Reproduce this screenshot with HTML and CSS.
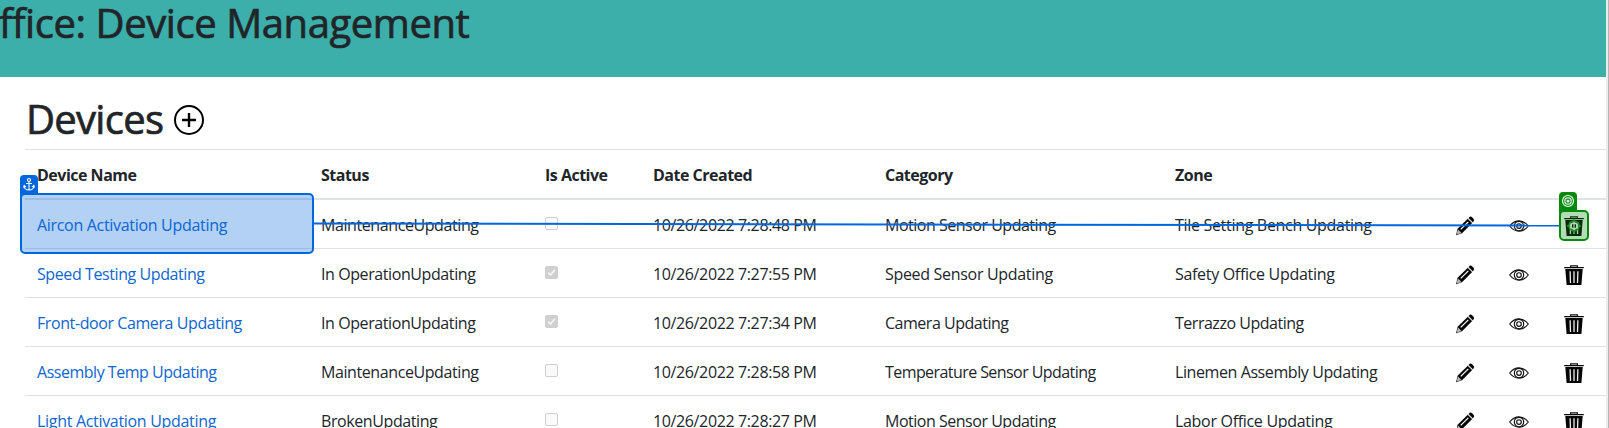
FILE: index.html
```html
<!DOCTYPE html>
<html lang="en">
<head>
<meta charset="utf-8">
<title>Device Management</title>
<link rel="stylesheet" href="styles.css">
</head>
<body>
<svg class="defs" width="0" height="0">
  <symbol id="pencil" viewBox="0 0 20 20">
    <path fill="#050505" d="M1 19.3 2.6 12.8 12.8 2.7 17.2 7.1 7 17.2Z"/>
    <path fill="#050505" d="M13.6 1.9 14.7.8Q15.8.1 16.9 1.1L18.7 2.9Q19.6 4.1 18.7 5.2L17.8 6.3Z"/>
    <path stroke="#fff" stroke-width="1.3" d="M5.7 13.4 13.3 5.9"/>
    <path stroke="#bbb" stroke-width="1" d="M12.8 2.3 17.5 7"/>
    <path fill="#bbb" d="M1.6 18.6 3 13.4 6.5 16.9Z"/>
  </symbol>
  <symbol id="eye" viewBox="0 0 20 20">
    <g fill="none" stroke="#111" stroke-width="1.15">
      <path d="M.7 10Q4.8 4.8 10 4.8T19.3 10Q15.2 15.2 10 15.2T.7 10Z"/>
      <circle cx="10" cy="10" r="4.7"/><circle cx="10" cy="10" r="2.3"/>
    </g>
  </symbol>
  <symbol id="trash" viewBox="0 0 20 20">
    <path fill="none" stroke="#111" stroke-width="1.2" d="M6.6 2.2V.8H13.4V2.2"/>
    <path fill="#050505" d="M.2 2H19.8V3.3H.2ZM1.3 4H18.7L17.4 20H2.6Z"/>
    <path stroke="#eee" stroke-width="1.3" d="M6.1 6.2 6.5 18M10 6.2V18M13.9 6.2 13.5 18"/>
  </symbol>
</svg>
<div class="page">
  <header class="banner"><h1>ffice: Device Management</h1></header>
  <main class="content">
    <h2 class="title"><span>Devices</span>
      <svg width="30" height="30" viewBox="0 0 30 30" fill="none" stroke="#000"><circle cx="15" cy="15" r="14" stroke-width="2"/><path stroke-width="2.4" d="M8 15H22M15 8V22"/></svg>
    </h2>
    <div class="table">
      <div class="row head"><b>Device Name</b><b>Status</b><b>Is Active</b><b>Date Created</b><b>Category</b><b>Zone</b></div>
      <div class="row"><a class="wide">Aircon Activation Updating</a><span>MaintenanceUpdating</span><i class="box"></i><span class="date">10/26/2022 7:28:48 PM</span><span class="category">Motion Sensor Updating</span><span class="wide">Tile Setting Bench Updating</span><svg class="ico"><use href="#pencil"/></svg><svg class="ico"><use href="#eye"/></svg><svg class="ico"><use href="#trash"/></svg></div>
      <div class="row"><a>Speed Testing Updating</a><span>In OperationUpdating</span><i class="box on"><svg viewBox="0 0 13 13"><path d="M2.6 6.7 5.2 9.4 10.5 3.4"/></svg></i><span class="date">10/26/2022 7:27:55 PM</span><span class="wide">Speed Sensor Updating</span><span class="wide">Safety Office Updating</span><svg class="ico"><use href="#pencil"/></svg><svg class="ico"><use href="#eye"/></svg><svg class="ico"><use href="#trash"/></svg></div>
      <div class="row"><a>Front-door Camera Updating</a><span>In OperationUpdating</span><i class="box on"><svg viewBox="0 0 13 13"><path d="M2.6 6.7 5.2 9.4 10.5 3.4"/></svg></i><span class="date">10/26/2022 7:27:34 PM</span><span class="category">Camera Updating</span><span class="category">Terrazzo Updating</span><svg class="ico"><use href="#pencil"/></svg><svg class="ico"><use href="#eye"/></svg><svg class="ico"><use href="#trash"/></svg></div>
      <div class="row"><a class="category">Assembly Temp Updating</a><span>MaintenanceUpdating</span><i class="box"></i><span class="date">10/26/2022 7:28:58 PM</span><span class="tight">Temperature Sensor Updating</span><span>Linemen Assembly Updating</span><svg class="ico"><use href="#pencil"/></svg><svg class="ico"><use href="#eye"/></svg><svg class="ico"><use href="#trash"/></svg></div>
      <div class="row"><a class="wide">Light Activation Updating</a><span>BrokenUpdating</span><i class="box"></i><span class="date">10/26/2022 7:28:27 PM</span><span class="category">Motion Sensor Updating</span><span class="wide">Labor Office Updating</span><svg class="ico"><use href="#pencil"/></svg><svg class="ico"><use href="#eye"/></svg><svg class="ico"><use href="#trash"/></svg></div>
    </div>
  </main>
</div>
<svg class="overlay" width="1609" height="428" fill="none">
  <path stroke="#0067df" stroke-width="2" d="M314 223.500 1559 225.500"/>
  <rect x="21" y="194" width="292" height="59" rx="4" fill="#0067df" fill-opacity=".3" stroke="#0067df" stroke-width="2"/>
  <path fill="#0067df" d="M20 198V179Q20 175 24 175H34Q38 175 38 179V194H24Z"/>
  <g stroke="#fff" stroke-width="1.1"><circle cx="29" cy="180" r="1.5"/><path d="M29 181.500V190M26 183.500H32M24 186Q24.500 190 29 190T34 186M23.500 187.500 24.200 185.500 26 187M32 187 33.800 185.500 34.500 187.500"/></g>
  <rect x="1560" y="211" width="28" height="29" rx="4" fill="#038a0e" fill-opacity=".3" stroke="#038a0e" stroke-width="2"/>
  <path fill="#038a0e" d="M1559 214V196Q1559 192 1563 192H1573Q1577 192 1577 196V211H1563Z"/>
  <g stroke="#fff" stroke-width="1.1"><circle cx="1568" cy="201" r="5.500"/><circle cx="1568" cy="201" r="3.200"/><circle cx="1568" cy="201" r="1"/></g>
  <g stroke="#23922b" stroke-width="1.500"><circle cx="1574" cy="226" r="5"/><circle cx="1574" cy="226" r="3" stroke="#b5dcb7"/><path d="M1574 219V222M1574 230V233M1567 226H1570M1578 226H1581"/></g>
</svg>
</body>
</html>
```
FILE: styles.css
```css
* { box-sizing: border-box; }
body { margin: 0; background: #fff; color: #212529; font: 16px/24px "Open Sans", "Noto Sans", sans-serif; overflow: hidden; }
.defs { position: absolute; }
.page { width: 1609px; height: 428px; overflow: hidden; border-right: 1px solid #b5b5b5; box-shadow: inset -2px 0 #ececec; }
.banner { width: 1606px; height: 77px; background: #3cafaa; }
h1, h2 { margin: 0; font-weight: 500; font-size: 40px; line-height: 48px; white-space: nowrap; -webkit-text-stroke: .7px #212529; }
h1 { letter-spacing: -.42px; line-height: 46px; text-indent: -1px; }
h2 { letter-spacing: -.7px; }
.content { width: 1606px; padding: 15px 0 0 25px; }
.title { display: flex; align-items: center; height: 57px; padding: 0 0 4px 1px; gap: 11px; }
.title svg { margin-top: 3px; }
.table { border-top: 1px solid #dee2e6; }
.row { display: grid; grid-template-columns: 284px 224px 108px 232px 290px 280px 54px 55px 1fr; align-items: center; height: 49px; padding-left: 12px; border-bottom: 1px solid #dee2e6; white-space: nowrap; }
.row > * { justify-self: start; }
.head { height: 50px; border-bottom: 2px solid #dee2e6; }
.row a { color: #0d66d0; }
.row a, .row span { letter-spacing: -.41px; padding-top: 1px; }
.row .date { letter-spacing: -.37px; }
.row .wide { letter-spacing: -.31px; }
.row .category { letter-spacing: -.48px; }
.row .tight { letter-spacing: -.57px; }
.head b { font-weight: 700; letter-spacing: -.5px; padding-top: 2px; }
.box { width: 13px; height: 13px; border: 1px solid #cfcfcf; border-radius: 2px; background: #fafafa; }
.row .box { margin-bottom: 2px; }
.on { background: #d0d0d0; }
.box svg { display: block; width: 11px; height: 11px; fill: none; stroke: #f5f5f5; stroke-width: 2; }
.ico { width: 20px; height: 20px; margin-top: 3px; }
.overlay { position: absolute; left: 0; top: 0; }
```
